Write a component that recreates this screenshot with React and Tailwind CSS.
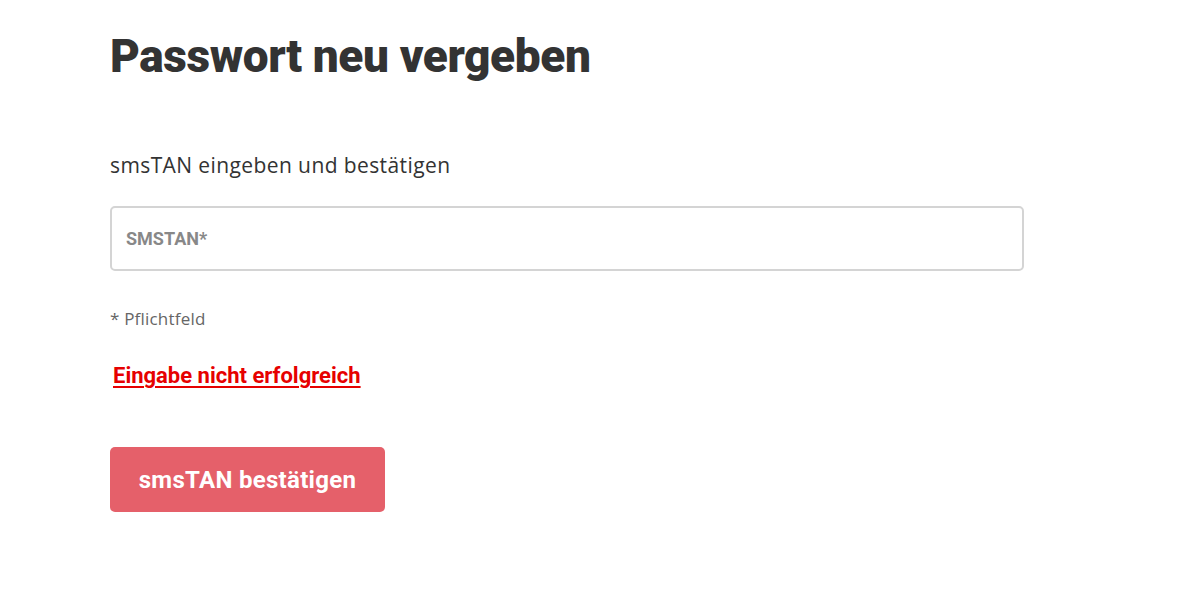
const App = () => {
  return (
    <div className="min-h-screen bg-white font-['Roboto',sans-serif] text-[#333333]">
      <div className="w-[914px] ml-[110px] pt-[28px]">
        {/* Heading */}
        <h1 className="text-[46px] leading-[56px] font-black tracking-[-0.4px] text-[#333333]">
          Passwort neu vergeben
        </h1>

        <p className="mt-[67px] font-['Open_Sans',sans-serif] text-[21px] tracking-[0.4px] leading-[28px]">smsTAN eingeben und bestätigen</p>

        {/* Input */}
        <div className="mt-[27px] h-[65px] border-2 border-[#d4d4d4] rounded-[5px] flex items-center px-[14px]">
          <input
            type="text"
            placeholder="SMSTAN*"
            className="w-full outline-none bg-transparent text-[18px] font-bold placeholder:text-[#888888] placeholder:font-bold"
          />
        </div>

        <p className="mt-[36px] font-['Open_Sans',sans-serif] text-[17px] tracking-[0.2px] leading-[24px] text-[#666666]">* Pflichtfeld</p>

        <a
          href="#"
          className="inline-block mt-[31px] ml-[3px] text-[22px] leading-[28px] font-bold text-[#e60000] underline underline-offset-[3px] decoration-2"
        >
          Eingabe nicht erfolgreich
        </a>

        <div className="mt-[57px]">
          <button
            type="button"
            className="h-[65px] w-[275px] rounded-[5px] bg-[#e5606a] text-white text-[24px] tracking-[0.3px] font-bold"
          >
            smsTAN bestätigen
          </button>
        </div>
      </div>
    </div>
  );
};

export default App;
